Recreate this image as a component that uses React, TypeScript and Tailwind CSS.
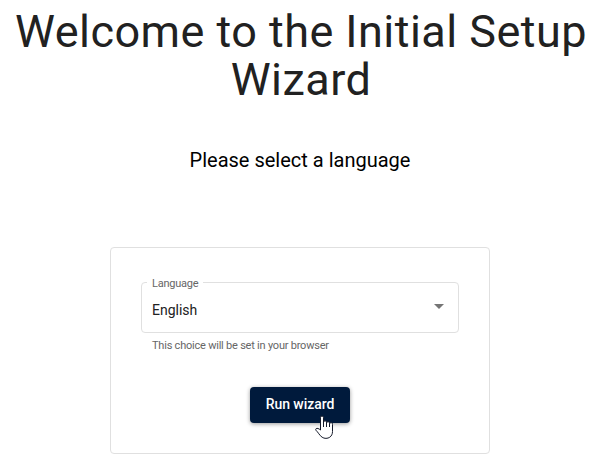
import type { ReactNode } from 'react';

const Caret = () => (
  <svg className="mb-[3px] h-[24px] w-[24px] fill-[#757575]" viewBox="0 0 24 24">
    <path d="M7 10l5 5 5-5z" />
  </svg>
);

// Hand cursor resting on the button
const HandPointer = () => (
  <svg className="absolute left-[65px] top-[28px] h-[25px] w-[19px]" viewBox="0 0 19 25">
    <path
      d="M5.5 15V2.5a1.5 1.5 0 0 1 3 0V7.2a1.5 1.5 0 0 1 3 .3v.5a1.5 1.5 0 0 1 3 .4v.5a1.5 1.5 0 0 1 3 .6v7c0 2.5-1 4.5-2.7 5.7-2 1.5-5.6 1.6-7.7 0C4.5 20.5 3 17 .9 15.2c-.8-1.4.8-2.3 2.1-1.7.9.3 1.700.9 2.5 1.5z"
      fill="white"
      stroke="#151a2a"
      strokeLinejoin="round"
    />
    <path d="M8.5 7v5M11.5 8v4M14.5 9v3" stroke="#151a2a" fill="none" />
  </svg>
);

const Card = ({ children }: { children: ReactNode }) => (
  <div className="mx-auto h-[207px] w-[380px] rounded border border-[#e0e0e0] px-[30px] pt-[34px]">
    {children}
  </div>
);

export default function App() {
  return (
    <main className="h-[462px] w-[603px] overflow-hidden bg-white font-['Roboto',sans-serif]">
      <h1 className="mt-[8px] w-[602px] text-center text-[45px] leading-[48px] tracking-[0.46px] text-[#212121]">
        Welcome to the Initial Setup Wizard
      </h1>
      <h2 className="mr-[3px] mt-[42px] text-center text-[20px] leading-[28px] text-black">
        Please select a language
      </h2>

      <div className="mr-[3px] mt-[73px]">
        <Card>
          <div className="relative flex h-[51px] items-center justify-between rounded border border-[#e0e0e0] pl-[10px] pr-[7px]">
            <span className="absolute -top-[6px] left-[5px] bg-white px-[5px] text-[11px] leading-[14px] tracking-[-0.25px] text-[#666666]">
              Language
            </span>
            <span className="mt-[5px] text-[14px] text-[#212121]">English</span>
            <Caret />
          </div>
          <p className="ml-[11px] mt-[6px] text-[11px] leading-[14px] tracking-[-0.22px] text-[#666666]">
            This choice will be set in your browser
          </p>
          <div className="relative mx-auto mt-[34px] w-[100px]">
            <button className="h-[36px] w-full rounded bg-[#001a3c] pb-[2px] text-[14px] font-medium tracking-[-0.05px] text-white shadow-[0_1px_4px_rgba(0,0,0,0.4)]">
              Run wizard
            </button>
            <HandPointer />
          </div>
        </Card>
      </div>
    </main>
  );
}
